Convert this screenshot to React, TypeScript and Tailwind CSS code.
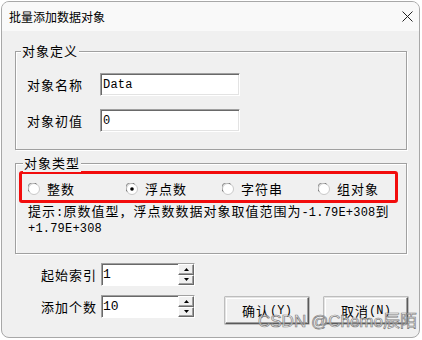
import type { ReactNode } from 'react';

const mono = "font-['Liberation_Mono',monospace] text-[12px] tracking-[0.2px]";

function Radio({ checked }: { checked?: boolean }) {
    return (
        <svg width="12" height="12" viewBox="0 0 12 12" className="shrink-0">
            <circle cx="6" cy="6" r="5.5" fill="#fff" stroke="#c8c8c8" />
            <path d="M1.2 8.6 A5 5 0 0 1 8.6 1.2" stroke="#7a7a7a" fill="none" />
            {checked && <circle cx="6" cy="6" r="1.8" fill="#000" />}
        </svg>
    );
}

function Sunken({ className, children }: { className: string; children?: ReactNode }) {
    return (
        <div className={`flex items-center border border-t-[#a0a0a0] border-l-[#a0a0a0] border-r-white border-b-white bg-white shadow-[inset_1px_1px_0_#696969,inset_-1px_-1px_0_#e3e3e3] ${className}`}>
            {children}
        </div>
    );
}

function Spin({ value }: { value: string }) {
    const btn = 'flex flex-1 items-center justify-center bg-[#f0f0f0] border border-t-white border-l-white border-r-[#696969] border-b-[#696969] shadow-[inset_-1px_-1px_0_#a0a0a0]';
    return (
        <div className="flex h-[23px] w-[94px] border border-t-[#a0a0a0] border-l-[#a0a0a0] border-r-white border-b-white">
            <div className="flex flex-1 items-center bg-white pl-[1px] shadow-[inset_1px_1px_0_#696969]">
                <span className="font-['Liberation_Mono',monospace] text-[13px] tracking-[0px]">{value}</span>
            </div>
            <div className="flex w-[16px] flex-col">
                <div className={btn}>
                    <svg width="5" height="3" viewBox="0 0 5 3"><path d="M2.5 0 L5 3 L0 3 Z" fill="#000" /></svg>
                </div>
                <div className={btn}>
                    <svg width="5" height="3" viewBox="0 0 5 3"><path d="M0 0 L5 0 L2.5 3 Z" fill="#000" /></svg>
                </div>
            </div>
        </div>
    );
}

function Button({ label, hot }: { label: string; hot: string }) {
    return (
        <button className="flex h-[27px] w-[84px] items-center justify-center border border-t-[#e3e3e3] border-l-[#e3e3e3] border-r-[#5a5a5a] border-b-[#5a5a5a] bg-[#f0f0f0] shadow-[inset_-1px_-1px_0_#a0a0a0,inset_1px_1px_0_#fff,0_0_0_0.5px_#8a8a8a]">
            <span>{label}</span>
            <span className={mono}>({hot})</span>
        </button>
    );
}

export default function App() {
    const options = [
        { label: '整数', w: 'w-[98px]' },
        { label: '浮点数', w: 'w-[96px]', checked: true },
        { label: '字符串', w: 'w-[96px]' },
        { label: '组对象', w: 'w-[70px]' },
    ];

    return (
        <div className="h-[340px] w-[422px] bg-white pl-px pt-px font-['Noto_Sans_CJK_SC',sans-serif] text-[13px] tracking-[1px] text-black">
            <div className="relative flex h-[337px] w-[419px] flex-col overflow-hidden rounded-lg border border-[#a8a8a8] bg-[#f0f0f0]">
                <div className="flex h-[29px] shrink-0 items-center justify-between bg-[#f9f9f9] pl-[7px] pr-[6px]">
                    <span className="text-[12px] tracking-[0px]">批量添加数据对象</span>
                    <svg width="11" height="11" viewBox="0 0 11 11">
                        <path d="M0.5 0.5 L10.5 10.5 M10.5 0.5 L0.5 10.5" stroke="#222" strokeWidth="1" />
                    </svg>
                </div>

                <div className="relative ml-[13px] mt-[20px] h-[99px] w-[392px] border border-[#a0a0a0] shadow-[1px_1px_0_#fff,inset_1px_1px_0_#fff]">
                    <span className="absolute -top-[10px] left-[5px] bg-[#f0f0f0] px-[1px] leading-[18px]">对象定义</span>
                    <div className="ml-[11px] mt-[21px] flex items-center">
                        <span className="w-[73px]">对象名称</span>
                        <Sunken className="h-[23px] w-[140px] pl-[2px]">
                            <span className={mono}>Data</span>
                        </Sunken>
                    </div>
                    <div className="ml-[11px] mt-[13px] flex items-center">
                        <span className="w-[73px]">对象初值</span>
                        <Sunken className="h-[23px] w-[140px] pl-[2px]">
                            <span className={mono}>0</span>
                        </Sunken>
                    </div>
                </div>

                <div className="relative ml-[13px] mt-[13px] h-[91px] w-[392px] border border-[#a0a0a0] shadow-[1px_1px_0_#fff,inset_1px_1px_0_#fff]">
                    <span className="absolute -top-[10px] left-[7px] bg-[#f0f0f0] px-[1px] leading-[18px]">对象类型</span>
                    <div className="ml-[3px] mt-[7px] flex h-[32px] w-[379px] items-center rounded-[3px] border-[3px] border-[#f20c0c] pl-[6px] pt-[4px]">
                        {options.map((o) => (
                            <div key={o.label} className={`flex items-center gap-[7px] ${o.w}`}>
                                <Radio checked={o.checked} />
                                <span className="leading-[16px]">{o.label}</span>
                            </div>
                        ))}
                    </div>
                    <div className="ml-[12px] mt-[1px] leading-[13px]">
                        提示<span className={mono}>:</span>原数值型，浮点数数据对象取值范围为<span className={mono}>-1.79E+308</span>到
                        <br />
                        <span className={mono}>+1.79E+308</span>
                    </div>
                </div>

                <div className="flex">
                    <div className="ml-[13px] flex flex-col gap-[9px] pt-[9px]">
                        <div className="flex items-center">
                            <span className="w-[86px] pr-[4px] text-right">起始索引</span>
                            <Spin value="1" />
                        </div>
                        <div className="flex items-center">
                            <span className="w-[86px] pr-[4px] text-right">添加个数</span>
                            <Spin value="10" />
                        </div>
                    </div>
                    <div className="ml-[30px] flex gap-[15px] pt-[43px]">
                        <Button label="确认" hot="Y" />
                        <Button label="取消" hot="N" />
                    </div>
                </div>

                <span className="pointer-events-none absolute left-[256px] top-[311px] font-['Liberation_Sans','Noto_Sans_CJK_SC',sans-serif] text-[17px] leading-[18px] tracking-[0px] text-white/60 [-webkit-text-stroke:0.7px_#7c7c7c]">
                    CSDN @Chemo辰陌
                </span>
            </div>
        </div>
    );
}
